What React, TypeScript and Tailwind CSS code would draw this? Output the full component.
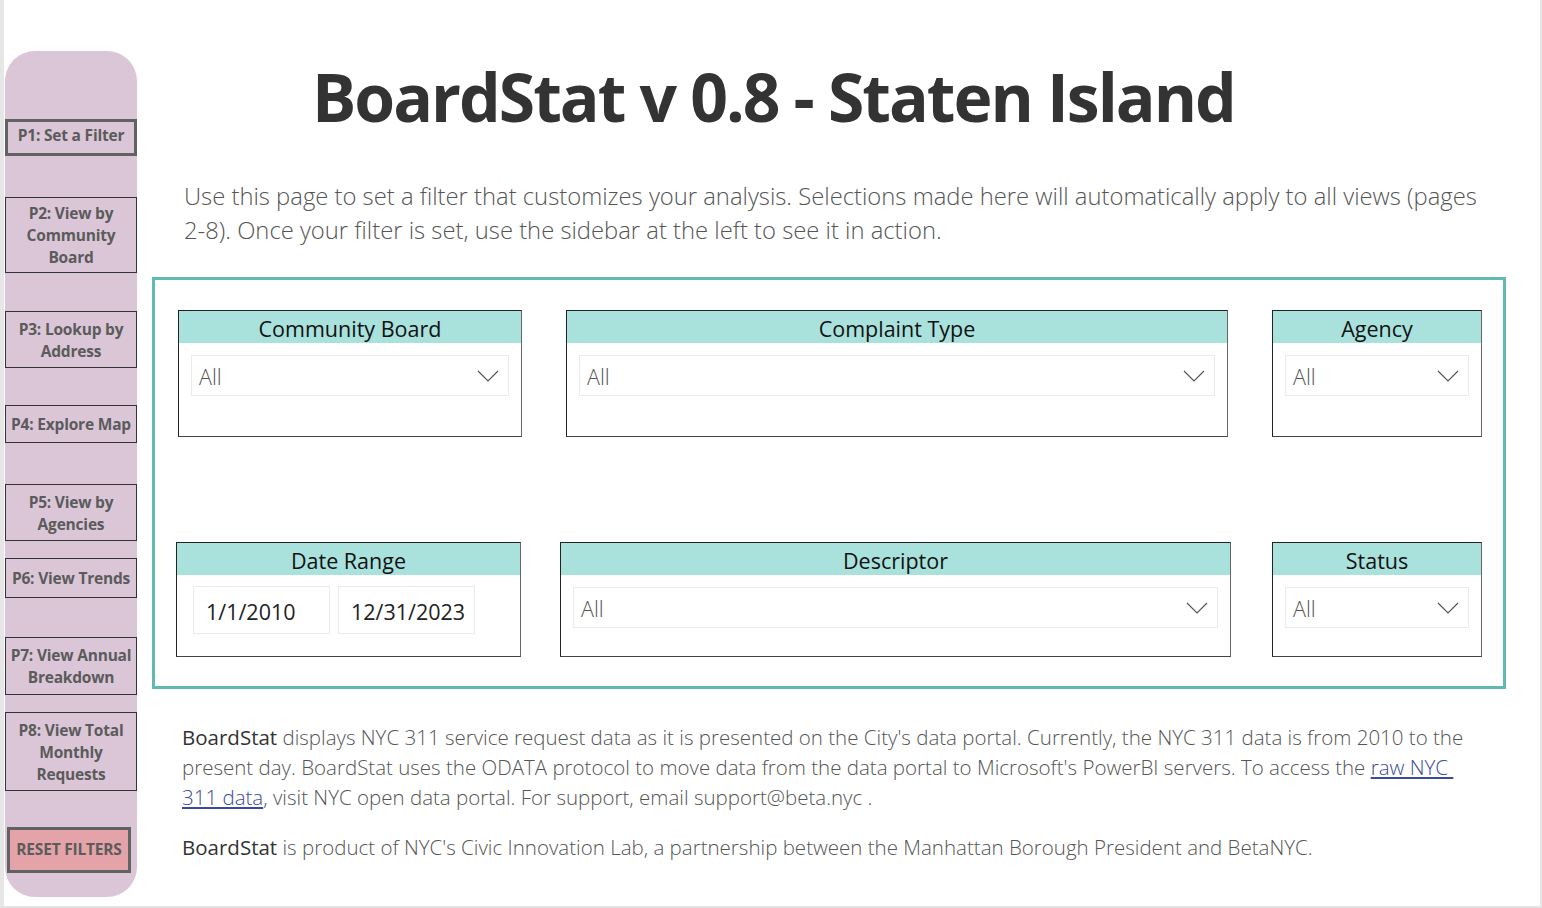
import React from "react";

const font = { fontFamily: '"Open Sans", "Noto Sans", sans-serif' };

function Chevron() {
  return (
    <svg width="22" height="12" viewBox="0 0 22 12" className="shrink-0">
      <polyline points="1,1 11,11 21,1" fill="none" stroke="#555" strokeWidth="1.2" />
    </svg>
  );
}

function NavBtn({ label, h, mt, thick }: { label: React.ReactNode; h: string; mt: string; thick?: boolean }) {
  return (
    <div
      className={`${h} ${mt} w-full flex items-center justify-center text-center text-[15.5px] leading-[22px] font-bold text-[#5b5b5b] tracking-[-0.2px] whitespace-nowrap ${
        thick ? "border-[3px] border-[#626262] pb-[5px]" : "border border-[#333]"
      }`}
    >
      <span>{label}</span>
    </div>
  );
}

function Dropdown({ w }: { w: string }) {
  return (
    <div className={`${w} mx-[12px] mt-[12px] h-[41px] border border-[#ebebeb] flex items-center justify-between pl-[7px] pr-[9px]`}>
      <span className="text-[21.5px] font-light text-[#555] pt-[4px]">All</span>
      <Chevron />
    </div>
  );
}

function Card({ title, w, h, children }: { title: string; w: string; h: string; children: React.ReactNode }) {
  return (
    <div className={`${w} ${h} border border-[#222] border-r-[#666] border-b-[#444] bg-white shrink-0`}>
      <div className="h-[32px] bg-[#a9e1dd] flex items-center justify-center pt-[5px] text-[21.5px] text-[#111]">{title}</div>
      {children}
    </div>
  );
}

export default function App() {
  return (
    <div style={font} className="w-[1542px] h-[908px] bg-white flex border-l-[4px] border-l-[#e6e6e6] border-r-[2px] border-r-[#e6e6e6] border-b-[2px] border-b-[#e3e3e3] overflow-hidden">
      <aside className="w-[132px] ml-[1px] mt-[51px] h-[846px] rounded-[30px] bg-[#dac6d7] flex flex-col shrink-0">
        <NavBtn label="P1: Set a Filter" h="h-[37px]" mt="mt-[68px]" thick />
        <NavBtn label={<>P2: View by<br />Community<br />Board</>} h="h-[76px]" mt="mt-[41px]" />
        <NavBtn label={<>P3: Lookup by<br />Address</>} h="h-[57px]" mt="mt-[38px]" />
        <NavBtn label="P4: Explore Map" h="h-[38px]" mt="mt-[37px]" />
        <NavBtn label={<>P5: View by<br />Agencies</>} h="h-[57px]" mt="mt-[41px]" />
        <NavBtn label="P6: View Trends" h="h-[40px]" mt="mt-[17px]" />
        <NavBtn label={<>P7: View Annual<br />Breakdown</>} h="h-[58px]" mt="mt-[39px]" />
        <NavBtn label={<>P8: View Total<br />Monthly<br />Requests</>} h="h-[79px]" mt="mt-[17px]" />
        <div className="mt-[36px] ml-[2px] w-[124px] h-[46px] bg-[#e3a3a8] border-[3px] border-[#626262] flex items-center justify-center text-[15.5px] font-bold text-[#5b5b5b] tracking-[-0.2px] whitespace-nowrap">
          RESET FILTERS
        </div>
      </aside>

      <main className="flex-1 flex flex-col">
        <h1 className="mt-[58px] ml-[175px] text-[66px] leading-[76px] font-bold text-[#333] whitespace-nowrap tracking-[-2px]">
          BoardStat v 0.8 - Staten Island
        </h1>

        <p className="mt-[45px] ml-[47px] text-[23.8px] leading-[34px] font-light text-[#555] whitespace-nowrap">
          Use this page to set a filter that customizes your analysis. Selections made here will automatically apply to all views (pages
          <br />
          2-8). Once your filter is set, use the sidebar at the left to see it in action.
        </p>

        <section className="mt-[30px] ml-[15px] w-[1354px] h-[412px] border-[3px] border-[#5fbbb1] flex flex-col">
          <div className="flex mt-[30px]">
            <div className="ml-[23px]">
              <Card title="Community Board" w="w-[344px]" h="h-[127px]">
                <Dropdown w="w-[318px]" />
              </Card>
            </div>
            <div className="ml-[44px]">
              <Card title="Complaint Type" w="w-[662px]" h="h-[127px]">
                <Dropdown w="w-[636px]" />
              </Card>
            </div>
            <div className="ml-[44px]">
              <Card title="Agency" w="w-[210px]" h="h-[127px]">
                <Dropdown w="w-[184px]" />
              </Card>
            </div>
          </div>

          <div className="flex mt-[105px]">
            <div className="ml-[21px]">
              <Card title="Date Range" w="w-[345px]" h="h-[115px]">
                <div className="flex gap-[8px] ml-[16px] mt-[11px]">
                  <div className="w-[137px] h-[48px] border border-[#ebebeb] flex items-center pl-[12px] pt-[4px] text-[21.5px] text-[#222]">1/1/2010</div>
                  <div className="w-[137px] h-[48px] border border-[#ebebeb] flex items-center pl-[12px] pt-[4px] text-[21.5px] text-[#222]">12/31/2023</div>
                </div>
              </Card>
            </div>
            <div className="ml-[39px]">
              <Card title="Descriptor" w="w-[671px]" h="h-[115px]">
                <Dropdown w="w-[645px]" />
              </Card>
            </div>
            <div className="ml-[41px]">
              <Card title="Status" w="w-[210px]" h="h-[115px]">
                <Dropdown w="w-[184px]" />
              </Card>
            </div>
          </div>
        </section>

        <div className="ml-[45px] mt-[33px] text-[20.5px] leading-[30px] font-light text-[#555] whitespace-nowrap">
          <p>
            <span className="font-normal text-[#333]">BoardStat</span> displays NYC 311 service request data as it is presented on the City's data portal. Currently, the NYC 311 data is from 2010 to the
            <br />
            present day. BoardStat uses the ODATA protocol to move data from the data portal to Microsoft's PowerBI servers. To access the{" "}
            <span className="text-[#3b4aa0] underline">raw NYC&nbsp;</span>
            <br />
            <span className="text-[#3b4aa0] underline">311 data</span>, visit NYC open data portal. For support, email support@beta.nyc .
          </p>
          <p className="mt-[20px]">
            <span className="font-normal text-[#333]">BoardStat</span> is product of NYC's Civic Innovation Lab, a partnership between the Manhattan Borough President and BetaNYC.
          </p>
        </div>
      </main>
    </div>
  );
}
